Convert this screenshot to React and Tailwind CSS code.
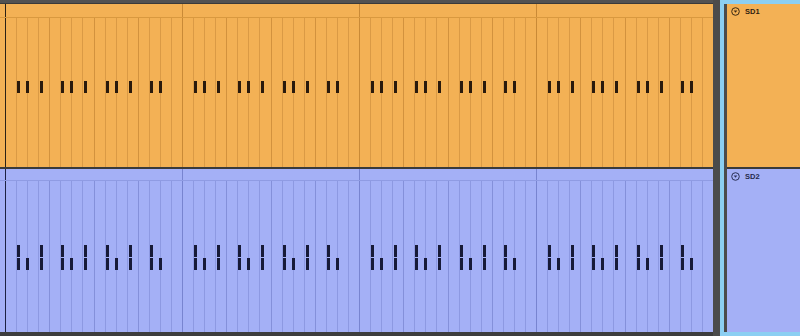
const themes = {
  orange: {
    bg: "bg-[#f3b155]",
    header: "h-[13px]",
    headerLine: "border-[#d9993f]",
    sixteenth: "border-[#da9a45]",
    beat: "border-[#d2923e]",
    bar: "border-[#c98a37]",
    start: "border-[#2b2115]",
    note: "bg-[#2a1a0c]",
    text: "text-[#2e2110]",
    icon: "#3a2914",
  },
  blue: {
    bg: "bg-[#a4b0f6]",
    header: "h-[11px]",
    headerLine: "border-[#8f9be3]",
    sixteenth: "border-[#8d99e2]",
    beat: "border-[#8490da]",
    bar: "border-[#7884d0]",
    start: "border-[#1c2142]",
    note: "bg-[#171a38]",
    text: "text-[#262a4c]",
    icon: "#2b3056",
  },
};

// per beat: [left offset, kind] ; kind "tall" = two stacked notes in the drum clip
const orangeBeat = [12, 21, 35];
const orangeLast = [12, 21];
const blueBeat = [
  [12, "tall"],
  [21, "low"],
  [35, "tall"],
];
const blueLast = [
  [12, "tall"],
  [21, "low"],
];

const Notes = ({ type, last }) => {
  const t = themes[type];
  if (type === "orange") {
    const list = last ? orangeLast : orangeBeat;
    return list.map((x) => (
      <div
        key={x}
        className={`absolute top-[63px] h-[12px] w-[3px] ${t.note}`}
        style={{ left: x }}
      />
    ));
  }
  const list = last ? blueLast : blueBeat;
  return list.map(([x, kind]) => (
    <div key={x}>
      {kind === "tall" && (
        <div
          className={`absolute top-[64px] h-[12px] w-[3px] ${t.note}`}
          style={{ left: x }}
        />
      )}
      <div
        className={`absolute top-[77px] h-[12px] w-[3px] ${t.note}`}
        style={{ left: x }}
      />
    </div>
  ));
};

const Clip = ({ type, height }) => {
  const t = themes[type];
  return (
    <div className={`${height} ${t.bg} flex flex-col`}>
      {/* clip title strip, only bar lines */}
      <div className={`${t.header} flex pl-[5px]`}>
        {[0, 1, 2, 3].map((b) => (
          <div
            key={b}
            className={`flex-1 border-l ${b === 0 ? t.start : t.bar}`}
          />
        ))}
      </div>
      {/* note grid */}
      <div className={`flex-1 flex pl-[5px] border-t ${t.headerLine}`}>
        {[0, 1, 2, 3].map((b) => (
          <div key={b} className="flex-1 flex">
            {[0, 1, 2, 3].map((q) => (
              <div key={q} className="flex-1 flex relative">
                {[0, 1, 2, 3].map((c) => (
                  <div
                    key={c}
                    className={`flex-1 border-l ${
                      c === 0 && q === 0
                        ? b === 0
                          ? t.start
                          : t.bar
                        : c === 0
                        ? t.beat
                        : t.sixteenth
                    }`}
                  />
                ))}
                <Notes type={type} last={q === 3} />
              </div>
            ))}
          </div>
        ))}
      </div>
    </div>
  );
};

const TrackHeader = ({ type, name, height }) => {
  const t = themes[type];
  return (
    <div className={`${height} ${t.bg} pl-[4px] pt-[3px]`}>
      <div className="flex items-center gap-[5px] h-[9px]">
        <svg width="9" height="9" viewBox="0 0 9 9">
          <circle cx="4.5" cy="4.5" r="3.8" fill="none" stroke={t.icon} strokeWidth="1" />
          <path d="M2.7 3.5 L6.3 3.5 L4.5 5.7 Z" fill={t.icon} />
        </svg>
        <span
          className={`text-[7.5px] font-bold leading-none ${t.text}`}
          style={{ fontFamily: '"Liberation Sans", Arial, sans-serif' }}
        >
          {name}
        </span>
      </div>
    </div>
  );
};

export default function App() {
  return (
    <div className="w-[800px] h-[336px] flex bg-[#4b4b4b] overflow-hidden">
      {/* arrangement lanes */}
      <div className="w-[713px] flex flex-col">
        <div className="h-[4px] bg-[#525252] border-b border-[#3a3a3a]" />
        <Clip type="orange" height="h-[163px]" />
        <div className="h-[2px] bg-[#3a3a3a]" />
        <Clip type="blue" height="h-[163px]" />
        <div className="h-[4px] bg-[#3d3d3d]" />
      </div>

      {/* gap */}
      <div className="w-[7px] bg-[#4b4b4b]" />

      {/* track headers with selection frame */}
      <div className="flex-1 flex bg-[#8ccff2]">
        <div className="w-[4px]" />
        <div className="flex-1 flex flex-col bg-[#4b4b4b] pl-[3px]">
          <div className="h-[4px] -ml-[3px] bg-[#8ccff2]" />
          <TrackHeader type="orange" name="SD1" height="h-[163px]" />
          <div className="h-[2px] bg-[#3a3a3a]" />
          <TrackHeader type="blue" name="SD2" height="h-[163px]" />
          <div className="h-[4px] -ml-[3px] bg-[#8ccff2]" />
        </div>
      </div>
    </div>
  );
}
